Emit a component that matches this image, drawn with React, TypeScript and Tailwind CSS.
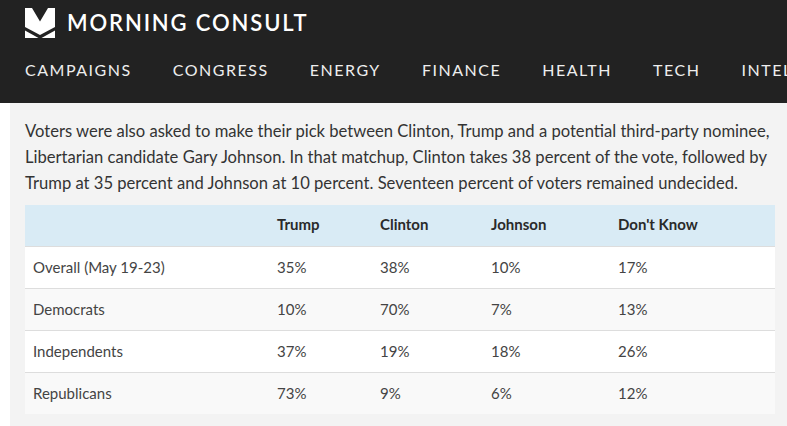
const navItems = ["CAMPAIGNS", "CONGRESS", "ENERGY", "FINANCE", "HEALTH", "TECH", "INTELLIGENCE"];

const rows = [
  { label: "Overall (May 19-23)", values: ["35%", "38%", "10%", "17%"] },
  { label: "Democrats", values: ["10%", "70%", "7%", "13%"] },
  { label: "Independents", values: ["37%", "19%", "18%", "26%"] },
  { label: "Republicans", values: ["73%", "9%", "6%", "12%"] },
];

function Logo() {
  return (
    <svg width="30" height="30" viewBox="0 0 30 30" className="shrink-0">
      <polygon points="0,0 7,0 15,13.5 23,0 30,0 30,19 15,27 0,19" fill="#fff" />
      <polygon points="0,22.5 0,30 13.5,30" fill="#fff" />
      <polygon points="30,22.5 30,30 16.5,30" fill="#fff" />
    </svg>
  );
}

export default function App() {
  return (
    <div className="h-[426px] w-[787px] overflow-hidden bg-white font-['Lato','Open_Sans',sans-serif]">
      <header className="h-[103px] bg-[#222222] pl-[25px]">
        <div className="flex h-[44px] items-center gap-[12px] pt-[1px]">
          <Logo />
          <span className="whitespace-nowrap text-[22px] font-semibold leading-none tracking-[0.085em] text-white">
            MORNING CONSULT
          </span>
        </div>
        <nav className="flex h-[52px] items-center gap-[41px] overflow-hidden whitespace-nowrap">
          {navItems.map((item) => (
            <span key={item} className="text-[16px] leading-none tracking-[0.095em] text-[#eeeeee]">
              {item}
            </span>
          ))}
        </nav>
      </header>

      <main className="ml-[10px] h-[323px] bg-[#f3f3f3] pl-[15px] pr-[12px] pt-[15px]">
        <p className="whitespace-nowrap text-[16.6px] leading-[26px] text-[#333333]">
          Voters were also asked to make their pick between Clinton, Trump and a potential third-party nominee,
          <br />
          Libertarian candidate Gary Johnson. In that matchup, Clinton takes 38 percent of the vote, followed by
          <br />
          Trump at 35 percent and Johnson at 10 percent. Seventeen percent of voters remained undecided.
        </p>

        <table className="mt-[9px] w-[750px] table-fixed border-collapse text-[15px]">
          <colgroup>
            <col className="w-[244px]" />
            <col className="w-[103px]" />
            <col className="w-[111px]" />
            <col className="w-[127px]" />
            <col className="w-[165px]" />
          </colgroup>
          <thead>
            <tr className="h-[41px] bg-[#d9ebf5]">
              <th />
              {["Trump", "Clinton", "Johnson", "Don't Know"].map((h) => (
                <th key={h} className="px-[8px] pb-[2px] text-left font-bold text-[#2a2a2a]">
                  {h}
                </th>
              ))}
            </tr>
          </thead>
          <tbody>
            {rows.map((row, i) => (
              <tr
                key={row.label}
                className={`h-[42px] border-t border-[#dddddd] ${i % 2 === 0 ? "bg-white" : "bg-[#f9f9f9]"}`}
              >
                <td className="px-[8px] text-[#444444]">{row.label}</td>
                {row.values.map((v, j) => (
                  <td key={j} className="px-[8px] text-[#444444]">
                    {v}
                  </td>
                ))}
              </tr>
            ))}
          </tbody>
        </table>
      </main>
    </div>
  );
}
